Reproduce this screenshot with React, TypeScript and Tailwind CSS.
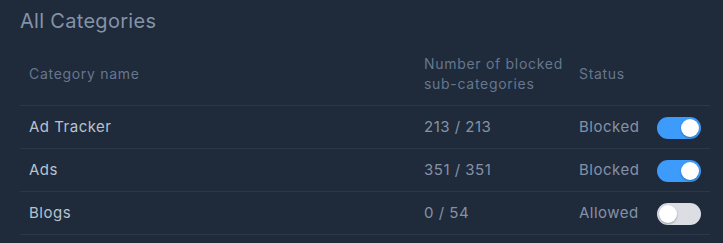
import React from "react";

type Row = { name: string; count: string; status: string; on: boolean };

const rows: Row[] = [
  { name: "Ad Tracker", count: "213 / 213", status: "Blocked", on: true },
  { name: "Ads", count: "351 / 351", status: "Blocked", on: true },
  { name: "Blogs", count: "0 / 54", status: "Allowed", on: false },
];

function Toggle({ on }: { on: boolean }) {
  return (
    <div
      className={
        on
          ? "w-[44px] h-[22px] rounded-full bg-[#3d9bfb] flex items-center justify-end px-[2px]"
          : "w-[44px] h-[22px] rounded-full bg-[#dcdee4] flex items-center justify-start px-[2px]"
      }
    >
      <div className="w-[18px] h-[18px] rounded-full bg-white shadow-[0_1px_2px_rgba(0,0,0,0.3)]" />
    </div>
  );
}

export default function App() {
  return (
    <div
      className="w-[723px] h-[243px] bg-[#1f2a3b] px-5 overflow-hidden"
      style={{ fontFamily: "Inter, 'Noto Sans', sans-serif" }}
    >
      <div className="h-[42px] pt-[8px] text-[20px] leading-[26px] tracking-[0.3px] text-[#8493a8]">All Categories</div>
      <div className="w-[690px]">
        <div className="grid grid-cols-[395px_155px_1fr] h-[64px] items-center border-b border-[#2c3748] text-[14px] tracking-[0.7px] text-[#66778d]">
          <div className="pl-[9px]">Category name</div>
          <div className="pl-[9px] leading-[20px]">
            Number of blocked
            <br />
            sub-categories
          </div>
          <div className="pl-[9px]">Status</div>
        </div>
        {rows.map((r) => (
          <div
            key={r.name}
            className="grid grid-cols-[395px_155px_1fr] h-[43px] items-center border-b border-[#2c3748] text-[15px] tracking-[0.5px] pt-[1px]"
          >
            <div className="pl-[9px] text-[#b8c2cf]">{r.name}</div>
            <div className="pl-[9px] text-[#8592a6]">{r.count}</div>
            <div className="pl-[9px] flex items-center">
              <span className="w-[78px] text-[#8592a6]">{r.status}</span>
              <Toggle on={r.on} />
            </div>
          </div>
        ))}
      </div>
    </div>
  );
}
